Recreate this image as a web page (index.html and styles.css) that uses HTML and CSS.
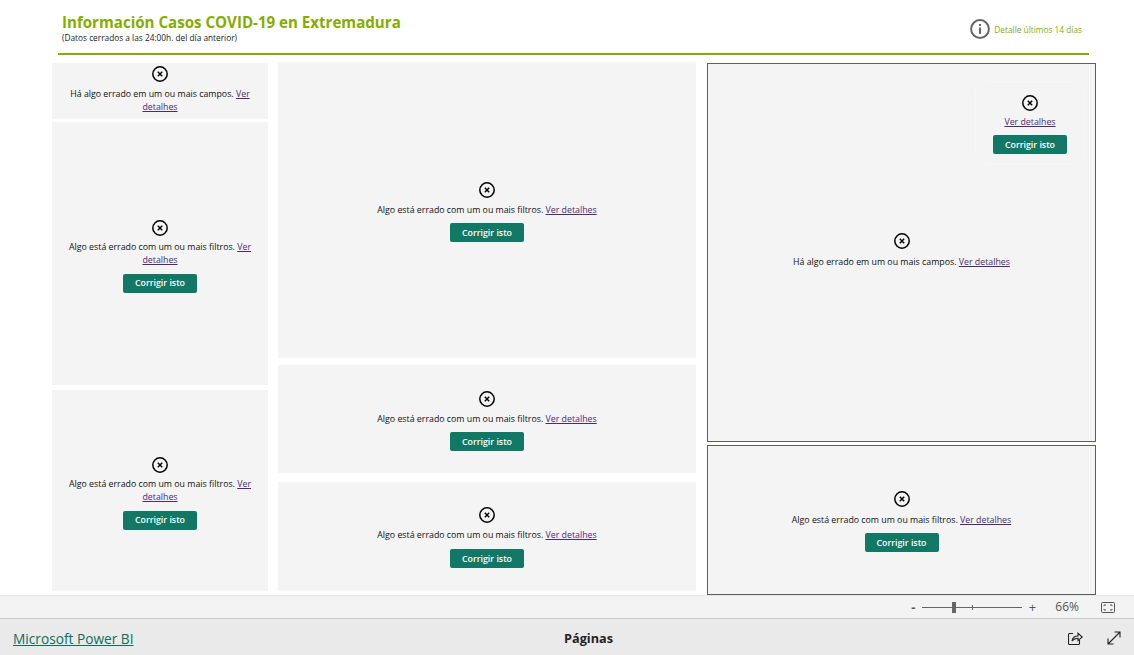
FILE: index.html
```html
<!DOCTYPE html>
<html lang="pt">
<head>
    <meta charset="UTF-8">
    <title>Información Casos COVID-19 en Extremadura</title>
    <link rel="stylesheet" href="styles.css">
</head>
<body>
    <main class="report">
        <header class="report-header">
            <div>
                <h1>Información Casos COVID-19 en Extremadura</h1>
                <p class="subtitle">(Datos cerrados a las 24:00h. del día anterior)</p>
            </div>
            <div class="detail">
                <svg class="detail-icon" width="20" height="20" viewBox="0 0 20 20">
                    <circle cx="10" cy="10" r="8.9" fill="none" stroke="#666" stroke-width="2"/>
                    <rect x="9" y="8.5" width="2" height="6.5" fill="#666"/>
                    <rect x="9" y="5" width="2" height="2" fill="#666"/>
                </svg>
                <span>Detalle últimos 14 días</span>
            </div>
        </header>

        <div class="canvas">
            <div class="col col-left">
                <section class="visual h-56 top">
                    <svg class="err" width="16" height="16" viewBox="0 0 16 16"><use href="#err-icon"/></svg>
                    <p class="msg">Há algo errado em um ou mais campos. <a href="#">Ver detalhes</a></p>
                </section>
                <section class="visual h-263">
                    <svg class="err" width="16" height="16" viewBox="0 0 16 16"><use href="#err-icon"/></svg>
                    <p class="msg">Algo está errado com um ou mais filtros. <a href="#">Ver detalhes</a></p>
                    <button>Corrigir isto</button>
                </section>
                <section class="visual h-201">
                    <svg class="err" width="16" height="16" viewBox="0 0 16 16"><use href="#err-icon"/></svg>
                    <p class="msg">Algo está errado com um ou mais filtros. <a href="#">Ver detalhes</a></p>
                    <button>Corrigir isto</button>
                </section>
            </div>

            <div class="col col-mid">
                <section class="visual h-296">
                    <svg class="err" width="16" height="16" viewBox="0 0 16 16"><use href="#err-icon"/></svg>
                    <p class="msg">Algo está errado com um ou mais filtros. <a href="#">Ver detalhes</a></p>
                    <button>Corrigir isto</button>
                </section>
                <section class="visual h-108">
                    <svg class="err" width="16" height="16" viewBox="0 0 16 16"><use href="#err-icon"/></svg>
                    <p class="msg">Algo está errado com um ou mais filtros. <a href="#">Ver detalhes</a></p>
                    <button>Corrigir isto</button>
                </section>
                <section class="visual h-109">
                    <svg class="err" width="16" height="16" viewBox="0 0 16 16"><use href="#err-icon"/></svg>
                    <p class="msg">Algo está errado com um ou mais filtros. <a href="#">Ver detalhes</a></p>
                    <button>Corrigir isto</button>
                </section>
            </div>

            <div class="col col-right">
                <section class="visual framed h-379">
                    <svg class="err" width="16" height="16" viewBox="0 0 16 16"><use href="#err-icon"/></svg>
                    <p class="msg">Há algo errado em um ou mais campos. <a href="#">Ver detalhes</a></p>
                    <div class="mini">
                        <svg class="err" width="16" height="16" viewBox="0 0 16 16"><use href="#err-icon"/></svg>
                        <p class="msg"><a href="#">Ver detalhes</a></p>
                        <button>Corrigir isto</button>
                    </div>
                </section>
                <section class="visual framed h-150">
                    <svg class="err" width="16" height="16" viewBox="0 0 16 16"><use href="#err-icon"/></svg>
                    <p class="msg">Algo está errado com um ou mais filtros. <a href="#">Ver detalhes</a></p>
                    <button>Corrigir isto</button>
                </section>
            </div>
        </div>
    </main>

    <div class="zoom-bar">
        <span class="zoom-sign minus">-</span>
        <div class="slider"><span class="tick"></span><span class="thumb"></span></div>
        <span class="zoom-sign">+</span>
        <span class="zoom-value">66%</span>
        <svg width="14" height="11" viewBox="0 0 14 11" fill="none" stroke="#555">
            <rect x="0.5" y="0.5" width="13" height="10" rx="1"/>
            <path d="M3 4V3h2M9 3h2v1M11 7v1H9M5 8H3V7"/>
        </svg>
    </div>

    <footer class="footer">
        <a class="brand" href="#">Microsoft Power BI</a>
        <span class="pages">Páginas</span>
        <div class="footer-icons">
            <svg width="15" height="15" viewBox="0 0 15 15" fill="none" stroke="#222" stroke-width="1.1">
                <path d="M5 2.500H1.500a1 1 0 0 0-1 1v9a1 1 0 0 0 1 1h9a1 1 0 0 0 1-1V9"/>
                <path d="M4 10c.5-3 2.500-5 6-5V2.200L14.200 6 10 9.600V7.200C7.500 7.200 5.500 8 4 10z"/>
            </svg>
            <svg width="14" height="14" viewBox="0 0 14 14" fill="none" stroke="#222" stroke-width="1.1">
                <path d="M1 13L13 1M7.500 1H13v5.500M1 7.500V13h5.500"/>
            </svg>
        </div>
    </footer>

    <svg width="0" height="0" class="defs">
        <symbol id="err-icon" viewBox="0 0 16 16">
            <circle cx="8" cy="8" r="7.200" fill="none" stroke="#000" stroke-width="1.500"/>
            <path d="M5.800 5.800l4.400 4.400M10.200 5.800l-4.400 4.400" stroke="#000" stroke-width="1.400"/>
        </symbol>
    </svg>
</body>
</html>
```

FILE: styles.css
```css
* {
    box-sizing: border-box;
}

html, body {
    height: 100%;
}

body {
    margin: 0;
    display: flex;
    flex-direction: column;
    height: 655px;
    overflow: hidden;
    font-family: 'Open Sans', 'Noto Sans', sans-serif;
    background-color: #fff;
    color: #252423;
}

.defs {
    position: absolute;
}

.report {
    height: 595px;
    overflow: hidden;
}

.report-header {
    display: flex;
    justify-content: space-between;
    align-items: flex-start;
    height: 55px;
    margin: 0 45px 0 58px;
    padding: 12px 7px 0 4px;
    border-bottom: 2px solid #84ad00;
}

h1 {
    margin: 0;
    font-size: 15.1px;
    line-height: 20px;
    font-weight: 700;
    color: #84ad00;
}

.subtitle {
    margin: 0;
    font-size: 8.3px;
    line-height: 11px;
    color: #222;
}

.detail {
    display: flex;
    align-items: center;
    gap: 4px;
    margin-top: 7px;
    font-size: 8.3px;
    color: #84ad00;
}

.canvas {
    display: flex;
    align-items: flex-start;
    margin: 7px 0 0 52px;
}

.col {
    display: flex;
    flex-direction: column;
}

.col-left {
    width: 216px;
    gap: 3px;
    margin-top: 1px;
    margin-right: 10px;
}

.col-left .h-201 {
    margin-top: 2px;
}

.col-left .h-263,
.col-left .h-201 {
    padding-top: 5px;
}

.col-left .h-263 .msg,
.col-left .h-201 .msg {
    margin-top: 5px;
}

.col-left .h-263 button,
.col-left .h-201 button {
    margin-top: 7px;
}

.col-mid {
    width: 418px;
    margin-right: 11px;
}

.col-mid .h-108 {
    margin-top: 7px;
}

.col-mid .h-109 {
    margin-top: 9px;
    padding-top: 2px;
}

.col-mid .h-109 button {
    margin-top: 7px;
}

.col-right {
    width: 389px;
    gap: 3px;
    margin-top: 1px;
}

.visual {
    position: relative;
    display: flex;
    flex-direction: column;
    align-items: center;
    justify-content: center;
    padding: 4px 12px 0;
    background-color: #f4f4f4;
    text-align: center;
}

.visual.top {
    justify-content: flex-start;
    padding-top: 3px;
}

.framed {
    border: 1px solid #5f5f55;
}

.framed.h-379 {
    padding-top: 0;
    padding-bottom: 4px;
}

.framed.h-150 {
    padding-top: 3px;
    padding-bottom: 0;
}

.framed > .msg {
    margin-top: 7px;
}

.h-56 { height: 56px; }
.h-263 { height: 263px; }
.h-201 { height: 201px; }
.h-296 { height: 296px; }
.h-108 { height: 108px; }
.h-109 { height: 109px; }
.h-379 { height: 379px; }
.h-150 { height: 150px; }

.err {
    display: block;
    flex-shrink: 0;
}

.msg {
    margin: 6px 0 0;
    font-size: 8.8px;
    line-height: 13px;
    color: #111;
}

.msg a {
    color: #4b2a7a;
    text-decoration: underline;
}

button {
    width: 74px;
    height: 19px;
    margin-top: 6px;
    padding: 0;
    border: none;
    border-radius: 2px;
    background-color: #117865;
    color: #fff;
    font-family: inherit;
    font-size: 8.8px;
    font-weight: 600;
}

.mini {
    position: absolute;
    top: 17px;
    right: 10px;
    width: 110px;
    height: 84px;
    display: flex;
    flex-direction: column;
    align-items: center;
    padding-top: 13px;
    border: 1px solid #f7f7f7;
    border-radius: 12px;
}

.mini .msg {
    margin-top: 5px;
}

.mini button {
    margin-top: 6px;
}

.zoom-bar {
    display: flex;
    align-items: center;
    justify-content: flex-end;
    height: 24px;
    padding-right: 19px;
    background-color: #f3f3f3;
    border-top: 1px solid #e6e6e6;
    border-bottom: 1px solid #c8c8c8;
    font-size: 12px;
    color: #555;
}

.zoom-sign {
    width: 10px;
    text-align: center;
    font-size: 13px;
}

.minus {
    font-weight: 700;
    margin-right: 2px;
    position: relative;
    left: 3px;
}

.slider {
    position: relative;
    width: 100px;
    height: 1px;
    margin: 0 5px;
    background-color: #666;
}

.tick {
    position: absolute;
    left: 50px;
    top: -2px;
    width: 1px;
    height: 5px;
    background-color: #666;
}

.thumb {
    position: absolute;
    left: 30px;
    top: -5px;
    width: 4px;
    height: 11px;
    background-color: #666;
}

.zoom-value {
    margin: 0 22px 0 18px;
    line-height: 12px;
}

.footer {
    position: relative;
    display: flex;
    align-items: center;
    justify-content: space-between;
    height: 36px;
    padding: 2px 13px 0;
    background-color: #eaeaea;
}

.brand {
    font-size: 13.7px;
    color: #0f6d60;
    text-decoration: underline;
}

.pages {
    position: absolute;
    left: 564px;
    font-size: 12.7px;
    font-weight: 700;
    color: #252423;
}

.footer-icons {
    display: flex;
    align-items: center;
    gap: 24px;
}

.footer-icons svg {
    display: block;
}
```
